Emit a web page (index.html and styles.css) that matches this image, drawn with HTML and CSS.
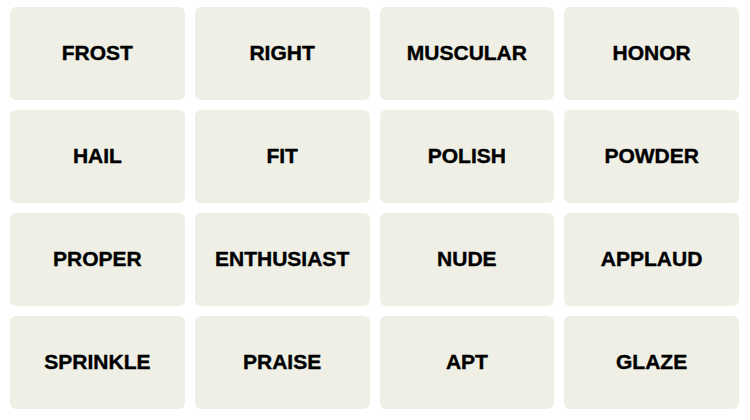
FILE: index.html
```html
<!DOCTYPE html>
<html>
<head>
<meta charset="utf-8">
<link rel="stylesheet" href="styles.css">
</head>
<body>
<div class="board">
  <div class="tile">FROST</div>
  <div class="tile">RIGHT</div>
  <div class="tile">MUSCULAR</div>
  <div class="tile">HONOR</div>
  <div class="tile">HAIL</div>
  <div class="tile">FIT</div>
  <div class="tile">POLISH</div>
  <div class="tile">POWDER</div>
  <div class="tile">PROPER</div>
  <div class="tile">ENTHUSIAST</div>
  <div class="tile">NUDE</div>
  <div class="tile">APPLAUD</div>
  <div class="tile">SPRINKLE</div>
  <div class="tile">PRAISE</div>
  <div class="tile">APT</div>
  <div class="tile">GLAZE</div>
</div>
</body>
</html>
```
FILE: styles.css
```css
html, body {
  margin: 0;
  padding: 0;
  background: #ffffff;
}
.board {
  display: grid;
  grid-template-columns: repeat(4, 174.75px);
  grid-template-rows: repeat(4, 93px);
  gap: 10px;
  padding: 7px 0 0 10px;
}
.tile {
  background: #efefe6;
  border-radius: 6px;
  display: flex;
  align-items: center;
  justify-content: center;
  padding-bottom: 1px;
  box-sizing: border-box;
  font-family: "Liberation Sans", Arial, sans-serif;
  font-weight: 700;
  font-size: 21px;
  letter-spacing: 0;
  color: #000000;
  -webkit-text-stroke: 0.4px #000000;
}
```
